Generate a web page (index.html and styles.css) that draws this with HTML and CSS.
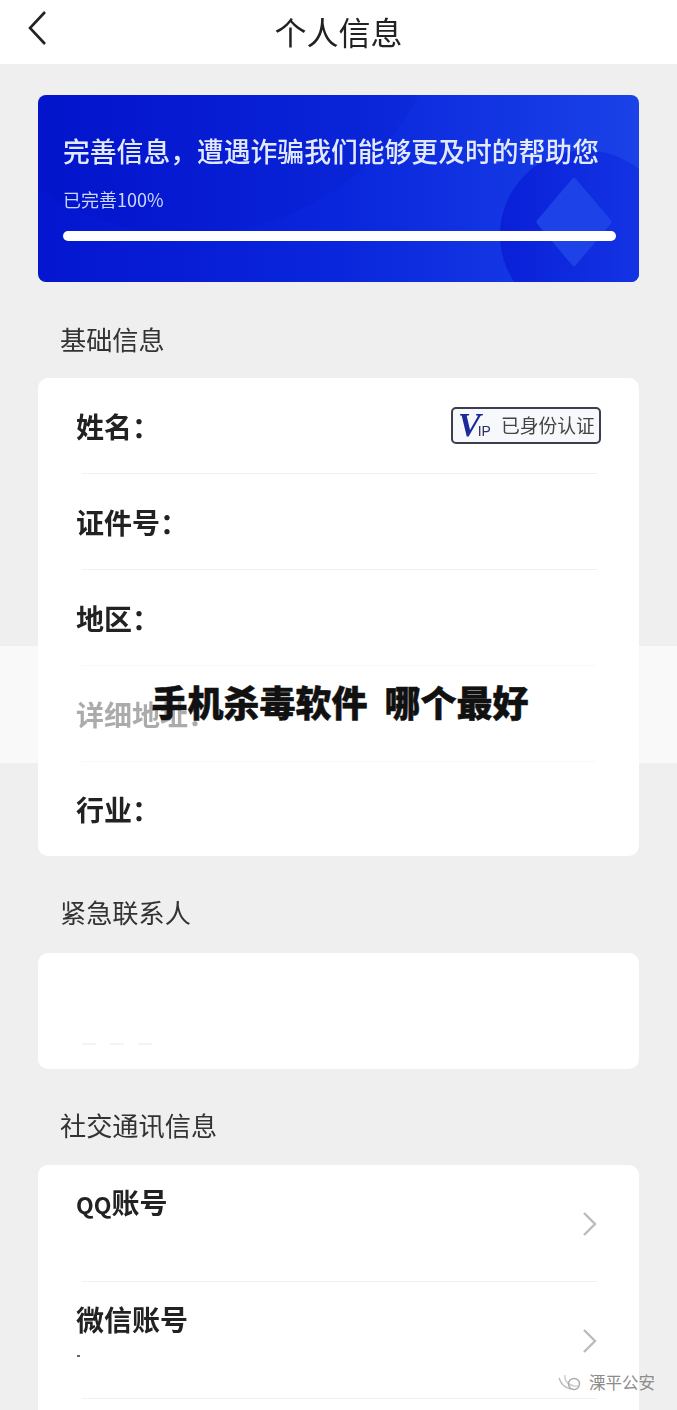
FILE: index.html
```html
<!DOCTYPE html>
<html lang="zh-CN">
<head>
  <meta charset="UTF-8">
  <meta name="viewport" content="width=device-width, initial-scale=1.0">
  <title>个人信息</title>
  <link rel="stylesheet" href="styles.css">
</head>
<body>
  <!-- 顶部导航 -->
  <header class="topbar">
    <svg class="back-icon" width="24" height="36" viewBox="0 0 24 36">
      <path d="M19 2 L4 18 L19 34" fill="none" stroke="#222" stroke-width="2.6"/>
    </svg>
    <h1>个人信息</h1>
  </header>

  <main class="content">
    <section class="banner">
      <div class="banner-arc"></div>
      <div class="banner-circle"></div>
      <div class="banner-diamond"></div>
      <p class="banner-title">完善信息，遭遇诈骗我们能够更及时的帮助您</p>
      <p class="banner-sub">已完善100%</p>
      <div class="progress"></div>
    </section>

    <h2 class="section-label label-first">基础信息</h2>
    <div class="card">
      <div class="row">
        <span class="row-name">姓名：</span>
        <span class="badge">
          <span class="badge-v">V</span><span class="badge-ip">IP</span>
          <span class="badge-text">已身份认证</span>
        </span>
      </div>
      <div class="row"><span class="row-name">证件号：</span></div>
      <div class="row"><span class="row-name">地区：</span></div>
      <div class="row"><span class="row-name">详细地址：</span></div>
      <div class="row row-last"><span class="row-name">行业：</span></div>
    </div>

    <h2 class="section-label label-second">紧急联系人</h2>
    <div class="card card-empty">
      <div class="smudges"><i></i><i></i><i></i></div>
    </div>

    <h2 class="section-label">社交通讯信息</h2>
    <div class="card card-last">
      <div class="row row-social">
        <span class="row-name"><span class="row-latin">QQ</span>账号</span>
        <svg class="chevron" width="16" height="26" viewBox="0 0 16 26">
          <path d="M2 2 L13 13 L2 24" fill="none" stroke="#bbb" stroke-width="2.4"/>
        </svg>
      </div>
      <div class="row row-social">
        <span class="row-name">微信账号</span>
        <i class="row-dot"></i>
        <svg class="chevron" width="16" height="26" viewBox="0 0 16 26">
          <path d="M2 2 L13 13 L2 24" fill="none" stroke="#bbb" stroke-width="2.4"/>
        </svg>
      </div>
    </div>
  </main>

  <!-- 文章标题横条 -->
  <div class="title-band">
    <span class="title-text">手机杀毒软件 哪个最好</span>
  </div>

  <!-- 水印 -->
  <div class="watermark">
    <svg width="26" height="20" viewBox="0 0 26 20">
      <path d="M2 6 C4 12 8 16 14 17" fill="none" stroke="#bbb" stroke-width="1.4"/>
      <path d="M8 3 C7 9 12 15 22 14" fill="none" stroke="#ccc" stroke-width="1.4"/>
      <circle cx="17" cy="12" r="5.5" fill="none" stroke="#aaa" stroke-width="1.4"/>
    </svg>
    <span>溧平公安</span>
  </div>
</body>
</html>
```

FILE: styles.css
```css
* {
  margin: 0;
  padding: 0;
  box-sizing: border-box;
}

html, body {
  height: 1410px;
  overflow: hidden;
}

body {
  position: relative;
  font-family: "Noto Sans CJK SC", "Liberation Sans", sans-serif;
  background-color: #efefef;
  color: #222;
}

.topbar {
  height: 64px;
  padding-bottom: 2px;
  background-color: #fff;
  display: flex;
  align-items: center;
  justify-content: center;
  position: relative;
  filter: blur(0.4px);
}

.topbar h1 {
  font-size: 32px;
  font-weight: 400;
  color: #222;
}

.back-icon {
  position: absolute;
  left: 26px;
  top: 10px;
}

.content {
  padding: 31px 38px 0;
  filter: blur(0.4px);
}

.banner {
  position: relative;
  overflow: hidden;
  height: 187px;
  padding: 37px 25px 0;
  border-radius: 8px;
  background: linear-gradient(90deg, #0416cf 0%, #0a26dc 50%, #1a42e8 100%);
  color: #e2e9ff;
}

.banner-arc {
  position: absolute;
  left: -110px;
  top: -380px;
  width: 520px;
  height: 520px;
  border-radius: 50%;
  background-color: rgba(0, 0, 170, 0.08);
}

.banner-circle {
  position: absolute;
  left: 462px;
  top: 55px;
  width: 170px;
  height: 170px;
  border-radius: 50%;
  background: linear-gradient(90deg, #0920d8, #1638e6);
}

.banner-diamond {
  position: absolute;
  left: 504px;
  top: 95px;
  width: 64px;
  height: 64px;
  transform: scaleX(0.85) rotate(45deg);
  border-radius: 3px;
  background-color: #1d42e8;
}

.banner-title {
  position: relative;
  font-size: 26.8px;
  font-weight: 500;
  line-height: 38px;
  white-space: nowrap;
}

.banner-sub {
  position: relative;
  margin-top: 17px;
  font-size: 18px;
  line-height: 24px;
  color: #ccd7ff;
}

.progress {
  position: relative;
  height: 10px;
  width: 553px;
  margin-top: 20px;
  border-radius: 5px;
  background-color: #fff;
}

.section-label {
  margin: 38px 0 22px 22px;
  font-size: 26.2px;
  font-weight: 400;
  line-height: 36px;
  color: #333;
}

.label-first {
  margin-top: 39px;
  margin-bottom: 21px;
}

.label-second {
  margin-bottom: 23px;
}

.card {
  background-color: #fff;
  border-radius: 10px;
}

.card-empty {
  height: 116px;
  padding: 90px 0 0 44px;
}

.card-last {
  padding-bottom: 40px;
}

.smudges {
  display: flex;
  gap: 14px;
}

.smudges i {
  width: 14px;
  height: 2px;
  background-color: #f4f4f4;
}

.row {
  height: 96px;
  margin: 0 42px 0 44px;
  display: flex;
  align-items: center;
  justify-content: space-between;
  border-bottom: 1px solid #f0f0f0;
}

.row-name {
  margin-left: -6px;
  font-size: 28px;
  font-weight: 700;
  color: #222;
}

.row-latin {
  font-size: 23px;
}

.row-last {
  height: 94px;
  border-bottom: none;
}

.row-social {
  position: relative;
  height: 117px;
  align-items: flex-start;
  padding-top: 17px;
}

.row-dot {
  position: absolute;
  left: -5px;
  top: 73px;
  width: 3px;
  height: 2px;
  background-color: #666;
}

.chevron {
  position: absolute;
  right: -1px;
  top: 46px;
}

.badge {
  display: flex;
  align-items: center;
  width: 150px;
  height: 37px;
  margin: -1px -4px 0 0;
  padding-left: 5px;
  border: 2px solid #3a3f50;
  border-radius: 5px;
  background-color: #f7f8fb;
}

.badge-v {
  font-family: "Liberation Serif", serif;
  font-size: 34px;
  font-weight: 700;
  font-style: italic;
  line-height: 30px;
  color: #1a2a9a;
}

.badge-ip {
  margin: 12px 0 0 -3px;
  font-family: "Liberation Sans", sans-serif;
  font-size: 14px;
  line-height: 14px;
  color: #2a3060;
}

.badge-text {
  margin-left: 10px;
  font-size: 18.8px;
  line-height: 24px;
  white-space: nowrap;
  color: #444;
}

.title-band {
  position: absolute;
  left: 0;
  top: 646px;
  width: 100%;
  height: 117px;
  padding-bottom: 8px;
  display: flex;
  align-items: center;
  justify-content: center;
  background-color: rgba(255, 255, 255, 0.62);
}

.title-text {
  margin-left: 3px;
  font-size: 36px;
  font-weight: 900;
  word-spacing: 9px;
  -webkit-text-stroke: 0.5px #111;
  color: #111;
  white-space: nowrap;
}

.watermark {
  position: absolute;
  left: 557px;
  top: 1371px;
  display: flex;
  align-items: center;
  gap: 6px;
  font-size: 16.5px;
  line-height: 22px;
  color: #8c8c8c;
}
```
